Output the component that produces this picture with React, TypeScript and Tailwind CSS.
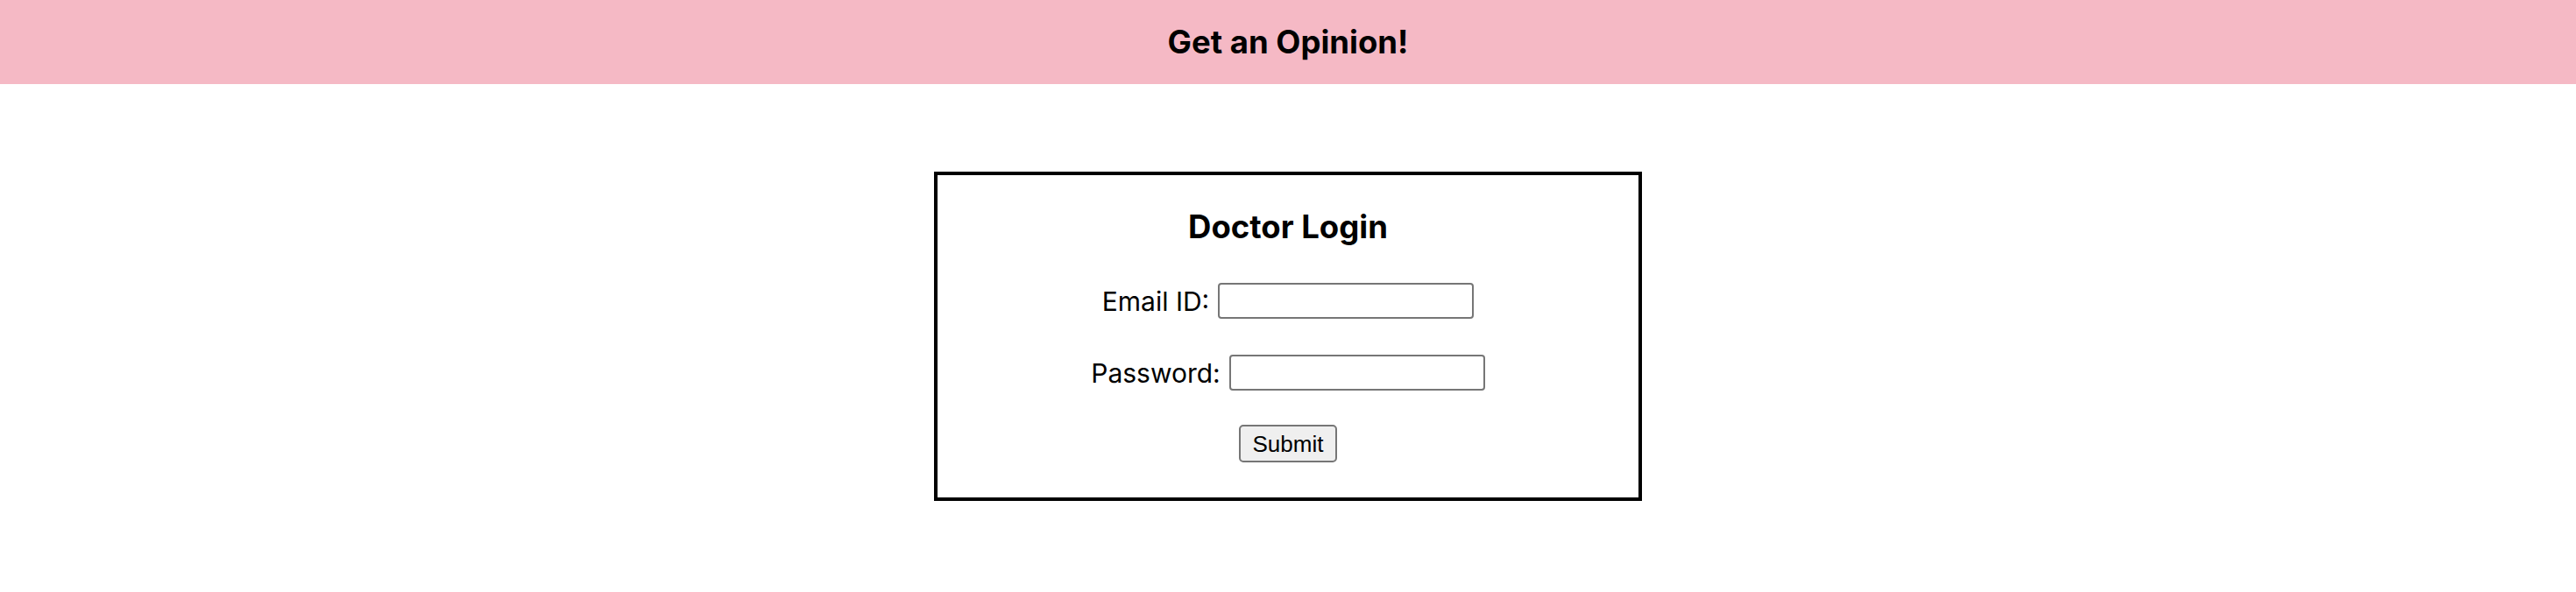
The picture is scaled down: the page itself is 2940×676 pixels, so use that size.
export default function App() {
  return (
    <div className="min-h-screen bg-white text-black" style={{ fontFamily: "Inter, 'Noto Sans', sans-serif" }}>
      <header className="h-[96px] bg-[#f5b9c5] flex items-center justify-center">
        <h1 className="text-[36.5px] leading-[36px] font-bold">Get an Opinion!</h1>
      </header>
      <main className="flex justify-center pt-[100px]">
        <form
          className="w-[808px] h-[376px] border-4 border-black flex flex-col items-center pt-[41px]"
          onSubmit={e => e.preventDefault()}
        >
          <h2 className="text-[36.5px] leading-[36px] font-bold">Doctor Login</h2>
          <div className="flex items-center gap-[10px] mt-[46px]">
            <label htmlFor="email" className="text-[30px] leading-[30px]">Email ID:</label>
            <input
              id="email"
              type="email"
              className="w-[292px] h-[41px] border-2 border-[#767676] rounded-[4px] bg-white px-2 text-[26px] outline-none"
            />
          </div>
          <div className="flex items-center gap-[10px] mt-[41px]">
            <label htmlFor="password" className="text-[30px] leading-[30px]">Password:</label>
            <input
              id="password"
              type="password"
              className="w-[292px] h-[41px] border-2 border-[#767676] rounded-[4px] bg-white px-2 text-[26px] outline-none"
            />
          </div>
          <button
            type="submit"
            className="mt-[39px] h-[43px] px-[14px] border-2 border-[#767676] rounded-[5px] bg-[#efefef] text-[26px] leading-[30px]"
            style={{ fontFamily: "'Liberation Sans', Arial, sans-serif" }}
          >
            Submit
          </button>
        </form>
      </main>
    </div>
  );
}
